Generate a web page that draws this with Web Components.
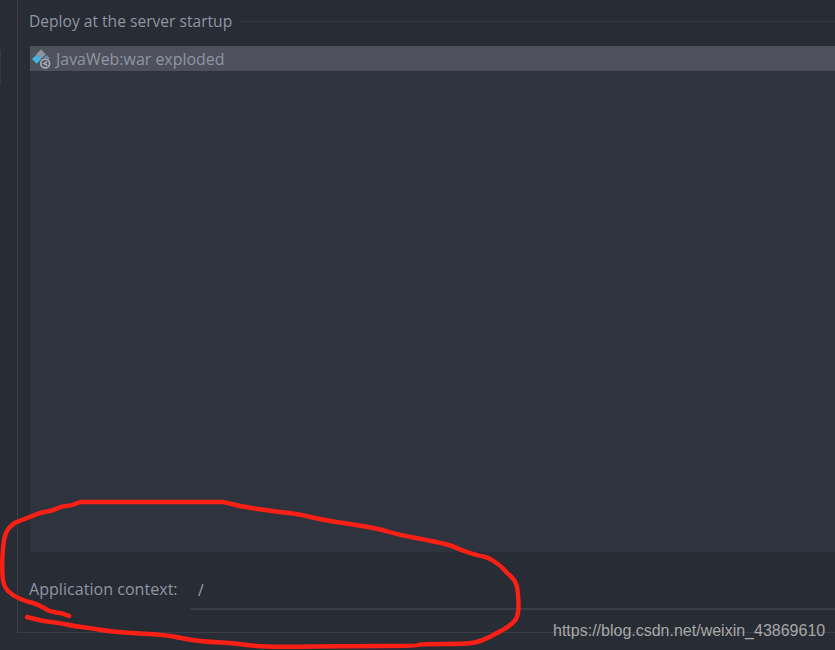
<!DOCTYPE html>
<html><head><meta charset="utf-8"><title>Deployment</title>
<style>
html,body{margin:0;height:100%;background:#282c34;overflow:hidden}
</style></head><body>
<deploy-panel>
  <deploy-group title-text="Deploy at the server startup">
    <artifact-list>
      <artifact-row selected>JavaWeb:war exploded</artifact-row>
    </artifact-list>
  </deploy-group>
  <context-field label="Application context:" value="/"></context-field>
</deploy-panel>
<red-scribble></red-scribble>
<water-mark>https://blog.csdn.net/weixin_43869610</water-mark>
<script>
class DeployPanel extends HTMLElement{
constructor(){
  super();
  this.attachShadow({mode:'open'}).innerHTML=`<style>
:host{display:flex;position:relative;width:835px;height:650px;box-sizing:border-box;padding-bottom:17px;background:#282c34;color:#8e96a3;font:15.6px "Open Sans","Noto Sans",sans-serif}
.gutter{width:17px;flex:none;padding-top:50px;box-sizing:border-box}
.gutter i{display:block;width:1px;height:34px;background:#353943}
.main{flex:1;min-width:0;display:flex;flex-direction:column;border-left:1px solid #3a3e49;border-bottom:1px solid #3a3e49;padding:0 0 0 11px}
</style><div class="gutter"><i></i></div><div class="main"><slot></slot></div>`;
}
}
class DeployGroup extends HTMLElement{
constructor(){
  super();
  this.attachShadow({mode:'open'}).innerHTML=`<style>
:host{display:flex;flex-direction:column;flex:none}
.head{display:flex;align-items:center;gap:6px;height:46px;padding-bottom:3px;box-sizing:border-box}
.head b{font-weight:400;white-space:nowrap;margin-top:-2px}
.head i{flex:1;height:1px;background:#333743}
</style><div class="head"><b></b><i></i></div><slot></slot>`;
}
connectedCallback(){
  this.shadowRoot.querySelector('b').textContent=this.getAttribute('title-text');
}
}
class ArtifactList extends HTMLElement{
constructor(){
  super();
  this.attachShadow({mode:'open'}).innerHTML=`<style>
:host{display:block;height:506px;margin-left:1px;background:#2f333d}
</style><slot></slot>`;
}
}
class ArtifactRow extends HTMLElement{
constructor(){
  super();
  this.attachShadow({mode:'open'}).innerHTML=`<style>
:host{display:flex;align-items:center;height:25px;gap:4px;padding-left:1px;font-size:15.95px}
:host([selected]){background:#4e515c}
svg{flex:none}
</style><svg width="21" height="21" viewBox="0 0 21 21">
<path d="M10 1.500l4.800 4.800-4.800 4.800-4.800-4.800z" fill="#8c96a0"/>
<path d="M15.500 7l3.300 3.300-3.300 3.300-3.300-3.300z" fill="#5f93ad"/>
<path d="M5.700 6.500l4.600 4.600-4.600 4.600-4.600-4.600z" fill="#41b4e0"/>
<circle cx="14.200" cy="15.500" r="5.600" fill="#4e515c"/>
<circle cx="14.200" cy="15.500" r="4.400" fill="none" stroke="#a3abb3" stroke-width="1.700"/>
<path d="M16.200 13.500l-3.300 2 3.300 2" fill="none" stroke="#a3abb3" stroke-width="1.600"/>
</svg><slot></slot>`;
}
}
class ContextField extends HTMLElement{
constructor(){
  super();
  this.attachShadow({mode:'open'}).innerHTML=`<style>
:host{display:flex;align-items:flex-start;height:80px;padding:27px 0 0 0;box-sizing:border-box}
.label{width:161px;flex:none;line-height:21px;white-space:nowrap;font-size:16.1px}
.input{flex:1;height:31px;box-sizing:border-box;border-bottom:2px solid #383c47;padding-left:8px;line-height:22px;color:#9a9fa8}
</style><span class="label"></span><span class="input"></span>`;
}
connectedCallback(){
  this.shadowRoot.querySelector('.label').textContent=this.getAttribute('label');
  this.shadowRoot.querySelector('.input').textContent=this.getAttribute('value');
}
}
class RedScribble extends HTMLElement{
constructor(){
  super();
  const pts=[[69,616],[63,613],[50,612],[38,604],[28,602],[13,596],[3,586],[2,565],[3,547],[5,533],[13,523],[25,519],[42,512],[52,511],[62,506],[70,506],[80,502],[81,502],[150,502],[222,502],[224,502],[243,507],[280,512],[298,514],[323,520],[350,524],[380,529],[395,534],[437,542],[453,546],[463,551],[480,556],[487,557],[500,565],[507,573],[515,580],[518,590],[519,616],[510,626],[497,633],[482,641],[467,644],[420,644],[417,646],[350,646],[280,647],[253,646],[233,643],[210,642],[190,640],[167,635],[130,633],[107,631],[90,628],[73,626],[60,623],[42,621],[27,617]];
  // smooth the hand-drawn line through the midpoints
  let d=`M${pts[0]}`;
  for(let i=1;i<pts.length-1;i++){
    const mx=(pts[i][0]+pts[i+1][0])/2,my=(pts[i][1]+pts[i+1][1])/2;
    d+=` Q${pts[i]} ${mx},${my}`;
  }
  d+=` L${pts[pts.length-1]}`;
  this.attachShadow({mode:'open'}).innerHTML=`<style>
:host{position:absolute;left:0;top:0;width:835px;height:650px;pointer-events:none}
svg{display:block}
</style><svg width="835" height="650"><path d="${d}" fill="none" stroke="#fb2015" stroke-width="4.400" stroke-linejoin="round" stroke-linecap="round"/></svg>`;
}
}
class WaterMark extends HTMLElement{
constructor(){
  super();
  this.attachShadow({mode:'open'}).innerHTML=`<style>
:host{position:absolute;left:553px;top:621px;font:16px/20px "Liberation Sans",Arial,sans-serif;color:#a8a8a8;white-space:nowrap}
</style><slot></slot>`;
}
}
customElements.define('deploy-panel',DeployPanel);
customElements.define('deploy-group',DeployGroup);
customElements.define('artifact-list',ArtifactList);
customElements.define('artifact-row',ArtifactRow);
customElements.define('context-field',ContextField);
customElements.define('red-scribble',RedScribble);
customElements.define('water-mark',WaterMark);
</script>
</body></html>
